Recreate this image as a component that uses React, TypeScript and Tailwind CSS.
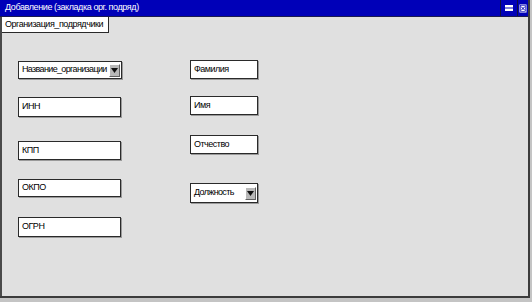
const font = { fontFamily: '"Liberation Sans", Arial, sans-serif' };

function Field({ label, className }: { label: string; className: string }) {
  return (
    <div
      className={`flex items-center bg-white border border-[#2a2a2a] shadow-[1px_1px_0_#9a9a9a] pl-[3px] text-[9px] tracking-[-0.5px] text-black ${className}`}
    >
      {label}
    </div>
  );
}

function Combo({ label, className }: { label: string; className: string }) {
  return (
    <div
      className={`flex items-center justify-between bg-white border border-[#2a2a2a] shadow-[1px_1px_0_#9a9a9a] pl-[3px] pr-[1px] text-[9px] tracking-[-0.65px] text-black ${className}`}
    >
      <span className="whitespace-nowrap">{label}</span>
      <span className="flex h-[13px] w-[11px] shrink-0 items-center justify-center bg-[#b8b8b8] border-l border-t border-white border-r border-b border-r-[#606060] border-b-[#606060]">
        <svg width="7" height="5" viewBox="0 0 7 5">
          <path d="M0 0h7L3.5 5z" fill="#111" />
        </svg>
      </span>
    </div>
  );
}

export default function App() {
  return (
    <div className="w-[532px] h-[302px] bg-[#c4c4c4] overflow-hidden" style={font}>
      <div className="flex h-[298px] w-[530px] flex-col border-r-2 border-b-2 border-[#3c3c3c]">
        <div className="flex h-[17px] items-center justify-between bg-[#0000b8] border-b border-[#1a1a50]">
          <span className="pl-[5px] text-[9px] tracking-[-0.4px] text-white">Добавление (закладка орг. подряд)</span>
          <div className="flex h-full">
            <div className="flex w-[17px] items-center justify-center border-l border-[#101040]">
              <svg width="8" height="8" viewBox="0 0 8 8">
                <rect x="0" y="1" width="8" height="2.5" fill="#fff" />
                <rect x="0" y="4.5" width="8" height="2.5" fill="#fff" />
              </svg>
            </div>
            <div className="flex w-[11px] items-center justify-center border-l border-[#101040]">
              <svg width="8" height="9" viewBox="0 0 8 9">
                <rect x="0.5" y="0.5" width="7" height="8" fill="#fff" />
                <rect x="1.5" y="1.5" width="5" height="6" fill="none" stroke="#0000b8" strokeWidth="0.6" />
                <path d="M2 2.5l4 4M6 2.5l-4 4" stroke="#0000b8" strokeWidth="1" />
              </svg>
            </div>
          </div>
        </div>
        <div className="flex flex-1 flex-col bg-[#e0e0e0] border-l-2 border-[#4a4a4a]">
          <div className="flex">
            <div className="flex h-[16px] w-[107px] items-center bg-white border-r border-b border-[#2a2a2a] pl-[3px] text-[9px] tracking-[-0.45px] text-black">
              Организация_подрядчики
            </div>
          </div>
          <div className="flex pl-[16px]">
            <div className="flex w-[104px] flex-col">
              <Combo label="Название_организации" className="mt-[28px] h-[18px] w-[104px]" />
              <Field label="ИНН" className="mt-[18px] h-[20px] w-[103px]" />
              <Field label="КПП" className="mt-[24px] h-[19px] w-[103px]" />
              <Field label="ОКПО" className="mt-[19px] h-[18px] w-[103px]" />
              <Field label="ОГРН" className="mt-[20px] h-[20px] w-[103px]" />
            </div>
            <div className="ml-[68px] flex w-[68px] flex-col">
              <Field label="Фамилия" className="mt-[27px] h-[19px] w-[68px]" />
              <Field label="Имя" className="mt-[17px] h-[19px] w-[68px]" />
              <Field label="Отчество" className="mt-[20px] h-[19px] w-[68px]" />
              <Combo label="Должность" className="mt-[29px] h-[20px] w-[68px]" />
            </div>
          </div>
        </div>
      </div>
    </div>
  );
}
